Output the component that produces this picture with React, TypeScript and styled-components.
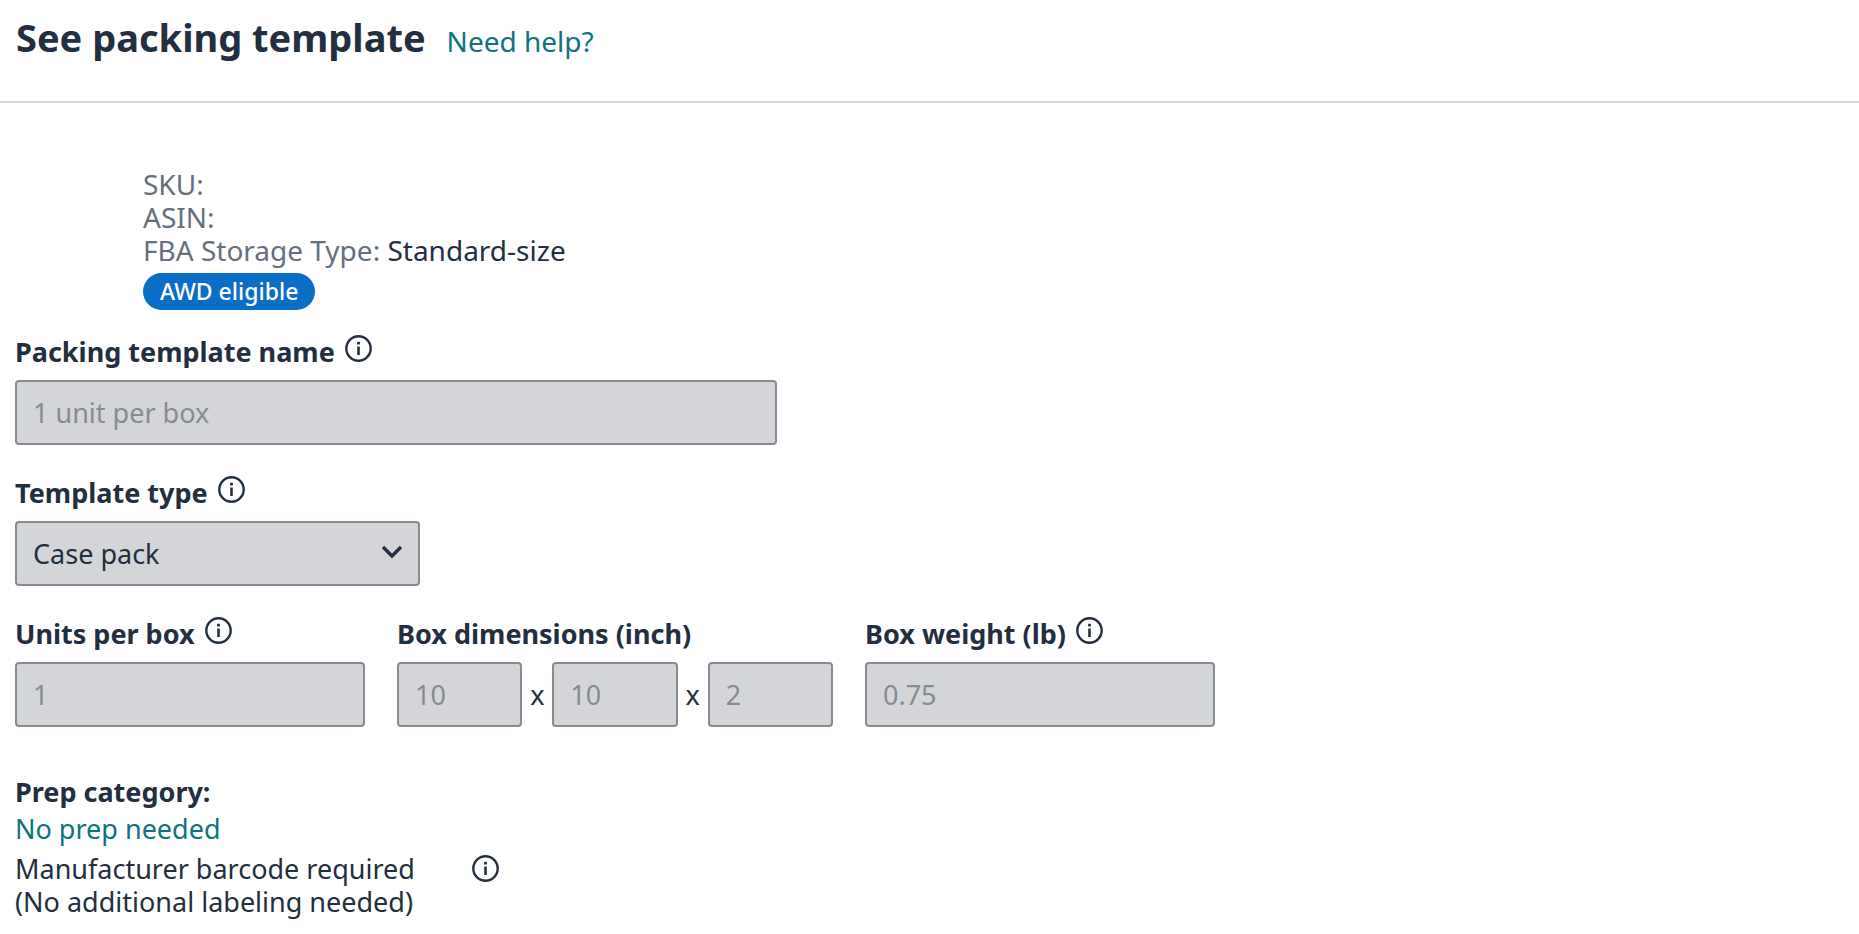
import React from 'react';
import styled, { createGlobalStyle } from 'styled-components';

const ink = '#232f3f';
const teal = '#0f7380';

const GlobalStyle = createGlobalStyle`
  *, *::before, *::after { box-sizing: border-box; }
  body {
    margin: 0;
    background: #fff;
    color: ${ink};
    font-family: "Noto Sans", "Open Sans", sans-serif;
    font-size: 27px;
    line-height: 33px;
  }
`;

const Header = styled.header`
  display: flex;
  align-items: baseline;
  gap: 21px;
  padding: 11px 16px 38px;
  border-bottom: 2px solid #d5d6d8;
  font-size: 28px;
`;

const Title = styled.h1`
  margin: 0;
  font-size: 38px;
  line-height: 52px;
  font-weight: 700;
`;

const TextLink = styled.a`
  color: ${teal};
  text-decoration: none;
`;

const Content = styled.main`
  padding: 65px 15px 16px;
`;

const Product = styled.section`
  margin-left: 128px;
  color: #66707d;
  font-size: 28px;
`;

const ProductLine = styled.div`
  line-height: 33px;
`;

const Value = styled.span`
  color: ${ink};
`;

const Badge = styled.span`
  display: block;
  width: fit-content;
  margin-top: 6px;
  padding: 0 17px;
  border-radius: 19px;
  background: #0a6ec6;
  color: #fff;
  font-size: 23px;
  line-height: 37px;
  font-weight: 500;
`;

const Form = styled.form`
  display: flex;
  flex-direction: column;
  gap: 27px;
  margin-top: 21px;
`;

const Field = styled.div<{ $width: number }>`
  width: ${(p) => p.$width}px;
  max-width: 100%;
`;

const LabelRow = styled.div`
  display: flex;
  align-items: flex-start;
  gap: 10px;
  height: 49px;
  padding-top: 4px;
`;

const labelText = `
  font-size: 27px;
  line-height: 34px;
  font-weight: 700;
  white-space: nowrap;
`;

const Label = styled.label`
  ${labelText}
`;

const GroupLabel = styled.span`
  ${labelText}
`;

const InfoButton = styled.button`
  display: flex;
  padding: 0;
  border: 0;
  background: none;
  color: ${ink};
  cursor: pointer;
`;

const controlBox = `
  display: block;
  width: 100%;
  height: 65px;
  padding: 0 16px;
  border: 2px solid #888c92;
  border-radius: 4px;
  background: #d4d5d9;
  font-family: inherit;
  font-size: 27px;
  opacity: 1;
`;

const TextInput = styled.input`
  ${controlBox}
  color: #888c92;
`;

const SelectWrap = styled.div`
  display: grid;
  align-items: center;
  > * { grid-area: 1 / 1; }
  > svg { justify-self: end; margin: 0 17px 4px 0; pointer-events: none; }
`;

const Select = styled.select`
  ${controlBox}
  appearance: none;
  color: ${ink};
`;

const FieldRow = styled.div`
  display: flex;
  flex-wrap: wrap;
  gap: 32px;
`;

const Dimensions = styled.div`
  display: grid;
  grid-template-columns: 1fr 30px 1fr 30px 1fr;
  align-items: center;
  text-align: center;
`;

const Prep = styled.section`
  margin-top: 46px;
`;

const PrepTitle = styled.h2`
  margin: 0;
  font-size: 27px;
  line-height: 38px;
  font-weight: 700;
`;

const PrepLink = styled(TextLink)`
  display: block;
  width: fit-content;
  line-height: 36px;
`;

const Barcode = styled.div`
  display: flex;
  align-items: flex-start;
  margin-top: 5px;

  ${InfoButton} {
    margin-top: 3px;
  }
`;

const BarcodeText = styled.p`
  width: 457px;
  margin: 0;
`;

function Info({ about }: { about: string }) {
  return (
    <InfoButton type="button" aria-label={`About ${about}`}>
      <svg width="27" height="27" viewBox="0 0 27 27" fill="none" aria-hidden="true">
        <circle cx="13.5" cy="13.5" r="12.2" stroke="currentColor" strokeWidth="2.4" />
        <path d="M13.5 11.5V20" stroke="currentColor" strokeWidth="2.6" />
        <path d="M13.5 6.8V9.5" stroke="currentColor" strokeWidth="2.8" />
      </svg>
    </InfoButton>
  );
}

interface TextFieldProps {
  id: string;
  label: string;
  value: string;
  width: number;
}

function TextField({ id, label, value, width }: TextFieldProps) {
  return (
    <Field $width={width}>
      <LabelRow>
        <Label htmlFor={id}>{label}</Label>
        <Info about={label} />
      </LabelRow>
      <TextInput id={id} value={value} disabled readOnly />
    </Field>
  );
}

export default function App() {
  return (
    <>
      <GlobalStyle />
      <Header>
        <Title>See packing template</Title>
        <TextLink href="#help">Need help?</TextLink>
      </Header>
      <Content>
        <Product>
          <ProductLine>SKU:</ProductLine>
          <ProductLine>ASIN:</ProductLine>
          <ProductLine>
            FBA Storage Type: <Value>Standard-size</Value>
          </ProductLine>
          <Badge>AWD eligible</Badge>
        </Product>
        <Form>
          <TextField id="name" label="Packing template name" value="1 unit per box" width={762} />
          <Field $width={405}>
            <LabelRow>
              <Label htmlFor="type">Template type</Label>
              <Info about="Template type" />
            </LabelRow>
            <SelectWrap>
              <Select id="type" disabled defaultValue="case">
                <option value="case">Case pack</option>
              </Select>
              <svg width="22" height="14" viewBox="0 0 22 14" fill="none" aria-hidden="true">
                <path d="M2 2L11 11L20 2" stroke={ink} strokeWidth="3.4" />
              </svg>
            </SelectWrap>
          </Field>
          <FieldRow>
            <TextField id="units" label="Units per box" value="1" width={350} />
            <Field $width={436} role="group" aria-labelledby="dimensions">
              <LabelRow>
                <GroupLabel id="dimensions">Box dimensions (inch)</GroupLabel>
              </LabelRow>
              <Dimensions>
                <TextInput aria-label="Length" value="10" disabled readOnly />
                <span>x</span>
                <TextInput aria-label="Width" value="10" disabled readOnly />
                <span>x</span>
                <TextInput aria-label="Height" value="2" disabled readOnly />
              </Dimensions>
            </Field>
            <TextField id="weight" label="Box weight (lb)" value="0.75" width={350} />
          </FieldRow>
        </Form>
        <Prep>
          <PrepTitle>Prep category:</PrepTitle>
          <PrepLink href="#prep">No prep needed</PrepLink>
          <Barcode>
            <BarcodeText>
              Manufacturer barcode required
              <br />
              (No additional labeling needed)
            </BarcodeText>
            <Info about="barcode labeling" />
          </Barcode>
        </Prep>
      </Content>
    </>
  );
}
